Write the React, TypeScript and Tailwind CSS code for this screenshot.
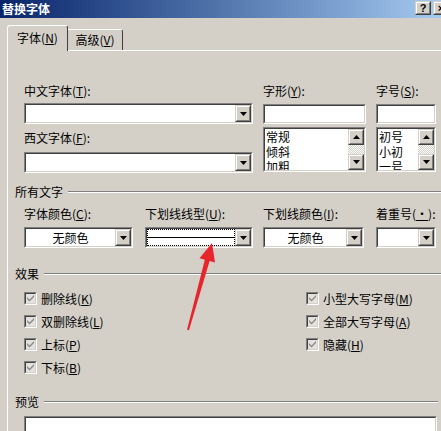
import React from "react";

const font = "font-['Noto_Sans_CJK_SC','Noto_Sans',sans-serif]";

// classic sunken frame (text boxes, lists, checkboxes)
function Sunken({ className = "", children }: { className?: string; children?: React.ReactNode }) {
  return (
    <div className={`border border-t-[#808080] border-l-[#808080] border-r-white border-b-white ${className}`}>
      <div className="w-full h-full border border-t-[#404040] border-l-[#404040] border-r-[#d4d0c8] border-b-[#d4d0c8] bg-white flex">
        {children}
      </div>
    </div>
  );
}

function Raised({ className = "", children }: { className?: string; children?: React.ReactNode }) {
  return (
    <div className={`border border-t-[#d4d0c8] border-l-[#d4d0c8] border-r-[#404040] border-b-[#404040] bg-[#d4d0c8] ${className}`}>
      <div className="w-full h-full border border-t-white border-l-white border-r-[#808080] border-b-[#808080] flex items-center justify-center">
        {children}
      </div>
    </div>
  );
}

function Arrow({ up = false }: { up?: boolean }) {
  return (
    <svg width="7" height="4" viewBox="0 0 7 4" className={up ? "rotate-180" : ""}>
      <path d="M0 0h7L3.5 4z" fill="#000" />
    </svg>
  );
}

function Combo({ className = "", children }: { className?: string; children?: React.ReactNode }) {
  return (
    <Sunken className={`h-[21px] ${className}`}>
      <div className="flex-1 min-w-0 flex items-center justify-center">{children}</div>
      <Raised className="w-[16px] h-full shrink-0">
        <Arrow />
      </Raised>
    </Sunken>
  );
}

function ListBox({ items }: { items: string[] }) {
  return (
    <Sunken className="h-[45px] mt-[3px]">
      <div className="flex-1 overflow-hidden pl-px">
        {items.map((it) => (
          <div key={it} className="h-[15px] leading-[15px]">
            {it}
          </div>
        ))}
      </div>
      <div className="w-[16px] flex flex-col bg-[conic-gradient(#fff_25%,#d4d0c8_0_50%,#fff_0_75%,#d4d0c8_0)] bg-[length:2px_2px]">
        <Raised className="h-[16px]">
          <Arrow up />
        </Raised>
        <div className="flex-1" />
        <Raised className="h-[16px]">
          <Arrow />
        </Raised>
      </div>
    </Sunken>
  );
}

function Label({ text, k, tail = ":" }: { text: string; k: string; tail?: string }) {
  return (
    <div className="h-[14px] leading-[14px] whitespace-nowrap">
      {text}(<span className="underline underline-offset-1">{k}</span>){tail}
    </div>
  );
}

function Group({ title }: { title: string }) {
  return (
    <div className="flex items-center h-[14px] pl-[7px]">
      <span className="leading-[14px] whitespace-nowrap">{title}</span>
      <div className="flex-1 ml-[5px] border-t border-t-[#808080] border-b border-b-white" />
    </div>
  );
}

function Check({ text, k }: { text: string; k: string }) {
  return (
    <div className="h-[23px] flex items-center gap-[4px]">
      <Sunken className="w-[13px] h-[13px]">
        <div className="w-full h-full bg-[#e4e2de] flex items-center justify-center">
          <svg width="7" height="7" viewBox="0 0 7 7">
            <path d="M0 2l2.5 2.5L7 0v2L2.5 6.5 0 4z" fill="#8a8a8a" />
          </svg>
        </div>
      </Sunken>
      <Label text={text} k={k} tail="" />
    </div>
  );
}

export default function App() {
  return (
    <div className={`w-[441px] h-[431px] overflow-hidden bg-[#d4d0c8] text-[12px] text-black relative ${font}`}>
      {/* title bar */}
      <div className="h-[18px] flex items-center pl-[2px] bg-linear-to-r from-[#0a246a] to-[#a6caf0]">
        <span className="text-white font-bold text-[12px] leading-[14px]">替换字体</span>
        <div className="flex-1" />
        <div className="flex gap-[2px] -mr-[8px] pb-[2px]">
          <Raised className="w-[16px] h-[14px]">
            <span className="font-bold text-[11px] leading-[10px] font-['Liberation_Sans',sans-serif]">?</span>
          </Raised>
          <Raised className="w-[16px] h-[14px]">
            <span className="font-bold text-[11px] leading-[10px] font-['Liberation_Sans',sans-serif]">×</span>
          </Raised>
        </div>
      </div>

      {/* tabs */}
      <div className="h-[32px] flex items-end pl-[7px]">
        <div className="relative z-10 -mb-px h-[26px] w-[61px] rounded-t-[3px] border-l border-t border-white border-r border-r-[#404040] bg-[#d4d0c8] flex items-center justify-center pb-px">
          <Label text="字体" k="N" tail="" />
        </div>
        <div className="h-[21px] w-[55px] rounded-tr-[3px] border-t border-white border-r border-r-[#404040] flex items-center justify-center">
          <Label text="高级" k="V" tail="" />
        </div>
      </div>

      {/* panel */}
      <div className="ml-[7px] h-[400px] border-l border-t border-white">
        <div className="flex pl-[16px] pt-[33px]">
          <div className="w-[229px]">
            <Label text="中文字体" k="T" />
            <Combo className="mt-[5px]" />
            <div className="mt-[7px]">
              <Label text="西文字体" k="F" />
            </div>
            <Combo className="mt-[7px]" />
          </div>
          <div className="w-[103px] ml-[10px]">
            <Label text="字形" k="Y" />
            <Sunken className="h-[20px] mt-[6px]" />
            <ListBox items={["常规", "倾斜", "加粗"]} />
          </div>
          <div className="w-[60px] ml-[10px]">
            <Label text="字号" k="S" />
            <Sunken className="h-[20px] mt-[6px]" />
            <ListBox items={["初号", "小初", "一号"]} />
          </div>
        </div>

        <div className="mt-[12px]">
          <Group title="所有文字" />
        </div>

        <div className="flex pl-[16px] mt-[8px]">
          <div className="w-[109px]">
            <Label text="字体颜色" k="C" />
            <Combo className="mt-[6px]">无颜色</Combo>
          </div>
          <div className="w-[108px] ml-[12px]">
            <Label text="下划线线型" k="U" />
            <Combo className="mt-[6px]">
              <div className="w-full h-full border border-dotted border-black flex items-center">
                <div className="w-full h-px bg-black" />
              </div>
            </Combo>
          </div>
          <div className="w-[101px] ml-[10px]">
            <Label text="下划线颜色" k="I" />
            <Combo className="mt-[6px]">无颜色</Combo>
          </div>
          <div className="w-[60px] ml-[12px]">
            <Label text="着重号" k="·" />
            <Combo className="mt-[6px]" />
          </div>
        </div>

        <div className="mt-[19px]">
          <Group title="效果" />
        </div>

        <div className="flex pl-[16px] mt-[6px]">
          <div className="w-[282px]">
            <Check text="删除线" k="K" />
            <Check text="双删除线" k="L" />
            <Check text="上标" k="P" />
            <Check text="下标" k="B" />
          </div>
          <div>
            <Check text="小型大写字母" k="M" />
            <Check text="全部大写字母" k="A" />
            <Check text="隐藏" k="H" />
          </div>
        </div>

        <div className="mt-[16px] pr-[3px]">
          <Group title="预览" />
        </div>
        <div className="ml-[16px] mt-[7px] w-[413px]">
          <Sunken className="h-[40px]" />
        </div>
      </div>

      {/* red annotation arrow */}
      <svg className="absolute left-0 top-0 pointer-events-none" width="441" height="431">
        <polygon
          points="212,243 215,262.5 209.6,261.1 189,330.3 187,329.7 204.8,259.7 199.5,258.3"
          fill="#e8242c"
        />
      </svg>
    </div>
  );
}
